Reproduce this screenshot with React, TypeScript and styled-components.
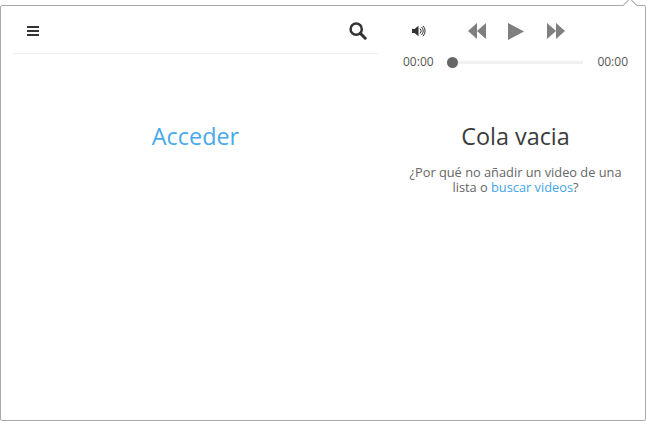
import * as React from 'react'
import styled, { createGlobalStyle } from 'styled-components'

const Global = createGlobalStyle`
  html, body {
    margin: 0;
    padding: 0;
    background: #fff;
    font-family: "Open Sans", sans-serif;
  }
`

const App = () => {
  return (
    <Page>
      <Global />
      <Popup>
        <Arrow />
        <Sidebar>
          <TopBar>
            <svg width="12" height="10" viewBox="0 0 12 10">
              <path d="M0 0h12v2H0zM0 4h12v2H0zM0 8h12v2H0z" fill="#333" />
            </svg>
            <svg width="18" height="18" viewBox="0 0 18 18">
              <circle cx="7.2" cy="7.2" r="5.6" fill="none" stroke="#333" strokeWidth="2.5" />
              <path d="M11.4 11.4l4.8 4.8" stroke="#333" strokeWidth="3" strokeLinecap="round" />
            </svg>
          </TopBar>
          <LoginLink>Acceder</LoginLink>
        </Sidebar>
        <Player>
          <Controls>
            <svg width="14" height="12" viewBox="0 0 14 12">
              <path d="M0 4h2.5L6.500 .8v10.400L2.500 8H0z" fill="#333" />
              <path d="M8 3.500a3.500 3.500 0 0 1 0 5M9.500 2a5.500 5.500 0 0 1 0 8M11 .8a7.500 7.500 0 0 1 0 10.400" fill="none" stroke="#333" strokeWidth="1" />
            </svg>
            <Transport>
              <svg width="18" height="16" viewBox="0 0 18 16">
                <path d="M9 0v16L0 8zM18 0v16L9 8z" fill="#7f7f7f" />
              </svg>
              <svg width="17" height="17" viewBox="0 0 17 17">
                <path d="M0 0l16 8.500L0 17z" fill="#7f7f7f" />
              </svg>
              <svg width="18" height="16" viewBox="0 0 18 16">
                <path d="M0 0l9 8-9 8zM9 0l9 8-9 8z" fill="#7f7f7f" />
              </svg>
            </Transport>
          </Controls>
          <Progress>
            <Time>00:00</Time>
            <Track>
              <Knob />
            </Track>
            <Time>00:00</Time>
          </Progress>
          <Empty>
            <EmptyTitle>Cola vacia</EmptyTitle>
            <EmptyText>
              ¿Por qué no añadir un video de una lista o <Link>buscar videos</Link>?
            </EmptyText>
          </Empty>
        </Player>
      </Popup>
    </Page>
  )
}

const Page = styled.div`
  width: 646px;
  height: 421px;
  padding-top: 5px;
  box-sizing: border-box;
  overflow: hidden;
`
const Popup = styled.div`
  position: relative;
  box-sizing: border-box;
  width: 646px;
  height: 416px;
  border: 1px solid #a9a9a9;
  border-radius: 2px;
  display: flex;
  background: #fff;
`
const Arrow = styled.div`
  position: absolute;
  top: -6px;
  right: 10px;
  width: 9px;
  height: 9px;
  background: #fff;
  border-top: 1px solid #a9a9a9;
  border-left: 1px solid #a9a9a9;
  transform: rotate(45deg);
`
const Sidebar = styled.div`
  width: 377px;
  padding-left: 12px;
  box-sizing: border-box;
  display: flex;
  flex-direction: column;
`
const TopBar = styled.div`
  height: 48px;
  box-sizing: border-box;
  border-bottom: 1px solid #f0f0f0;
  padding: 2px 11px 0 14px;
  display: flex;
  align-items: center;
  justify-content: space-between;
`
const LoginLink = styled.a`
  margin-top: 67px;
  text-align: center;
  font-size: 23.400px;
  line-height: 30px;
  color: #4aa9ea;
  cursor: pointer;
`
const Player = styled.div`
  flex: 1;
  display: flex;
  flex-direction: column;
  padding: 0 17px 0 25px;
`
const Controls = styled.div`
  height: 50px;
  padding-left: 9px;
  display: flex;
  align-items: center;
`
const Transport = styled.div`
  display: flex;
  align-items: center;
  gap: 22px;
  margin-left: 42px;
`
const Progress = styled.div`
  display: flex;
  align-items: center;
  gap: 14px;
`
const Time = styled.span`
  font-size: 12px;
  line-height: 12px;
  color: #555;
`
const Track = styled.div`
  position: relative;
  flex: 1;
  height: 3px;
  background: #f0f0f0;
`
const Knob = styled.div`
  position: absolute;
  left: -1px;
  top: -4px;
  width: 11px;
  height: 11px;
  border-radius: 50%;
  background: #666;
`
const Empty = styled.div`
  margin-top: 53px;
  text-align: center;
`
const EmptyTitle = styled.div`
  font-size: 23.400px;
  line-height: 30px;
  color: #3c3c3c;
`
const EmptyText = styled.p`
  margin: 14px 0 0;
  font-size: 12.800px;
  line-height: 15px;
  color: #666;
`
const Link = styled.a`
  color: #42a5e8;
  cursor: pointer;
`

export default App
